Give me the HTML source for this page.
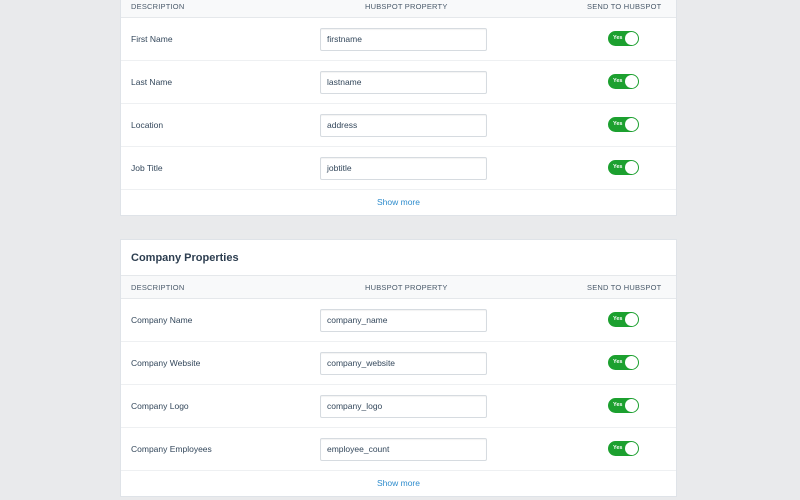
<!DOCTYPE html>
<html><head><style>
*{box-sizing:border-box;margin:0;padding:0}
body{width:800px;height:500px;background:#e9eaec;font-family:"Liberation Sans",sans-serif;position:relative;overflow:hidden;color:#33475b}
.panel{position:absolute;left:120px;width:557px;background:#fff;border:1px solid #dfe3e8}
.title{height:36px;padding-left:10px;line-height:36px;font-size:11px;font-weight:bold;color:#2d3e50;border-bottom:1px solid #e5e8eb}
.hdr{height:23px;background:#f8f9fa;border-bottom:1px solid #e5e8eb;position:relative;font-size:7.5px;color:#4a5a6a;letter-spacing:.2px}
.hdr span{position:absolute;top:7px}
.row{height:43px;border-bottom:1px solid #eef0f2;position:relative;font-size:8.5px}
.row .d{position:absolute;left:10px;top:16px}
.row .in{position:absolute;left:199px;top:10px;width:167px;height:23px;border:1px solid #d6dbe0;border-radius:2px;padding-left:6px;line-height:21px;font-size:8.5px;color:#33475b;box-shadow:inset 0 1px 1px rgba(0,0,0,.05)}
.tg{position:absolute;left:487px;top:13px;width:31px;height:15px;background:#1ca02f;border-radius:8px}
.tg b{position:absolute;right:1px;top:1px;width:13px;height:13px;background:#fff;border-radius:50%}
.tg i{position:absolute;left:5px;top:4px;font-style:normal;font-size:5.5px;font-weight:bold;color:#fff}
.more{height:25px;text-align:center;line-height:24px;font-size:8.5px;color:#2e8ccd}
</style></head><body>
<div class="panel" style="top:-6px">
<div class="hdr"><span style="left:10px;top:7px">DESCRIPTION</span><span style="left:244px;top:7px">HUBSPOT PROPERTY</span><span style="left:466px;top:7px">SEND TO HUBSPOT</span></div>
<div class="row"><span class="d">First Name</span><div class="in">firstname</div><div class="tg"><i>Yes</i><b></b></div></div>
<div class="row"><span class="d">Last Name</span><div class="in">lastname</div><div class="tg"><i>Yes</i><b></b></div></div>
<div class="row"><span class="d">Location</span><div class="in">address</div><div class="tg"><i>Yes</i><b></b></div></div>
<div class="row"><span class="d">Job Title</span><div class="in">jobtitle</div><div class="tg"><i>Yes</i><b></b></div></div>
<div class="more">Show more</div>
</div>
<div class="panel" style="top:239px">
<div class="title">Company Properties</div>
<div class="hdr"><span style="left:10px">DESCRIPTION</span><span style="left:244px">HUBSPOT PROPERTY</span><span style="left:466px">SEND TO HUBSPOT</span></div>
<div class="row"><span class="d">Company Name</span><div class="in">company_name</div><div class="tg"><i>Yes</i><b></b></div></div>
<div class="row"><span class="d">Company Website</span><div class="in">company_website</div><div class="tg"><i>Yes</i><b></b></div></div>
<div class="row"><span class="d">Company Logo</span><div class="in">company_logo</div><div class="tg"><i>Yes</i><b></b></div></div>
<div class="row"><span class="d">Company Employees</span><div class="in">employee_count</div><div class="tg"><i>Yes</i><b></b></div></div>
<div class="more">Show more</div>
</div>
</body></html>
